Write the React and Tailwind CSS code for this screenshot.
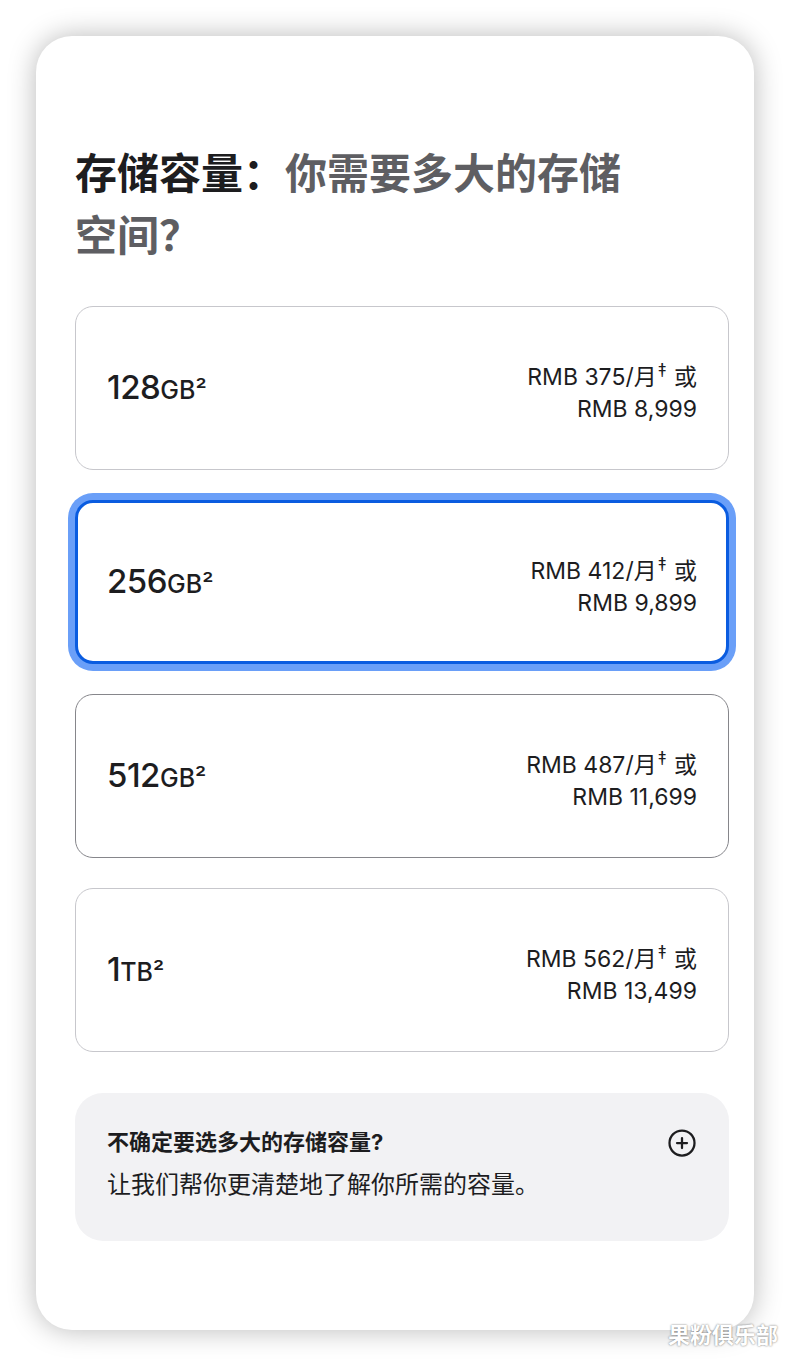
import React from 'react';
import { CirclePlus } from 'lucide-react';

const options = [
    { size: '128', unit: 'GB', monthly: '375', price: '8,999' },
    { size: '256', unit: 'GB', monthly: '412', price: '9,899', selected: true },
    { size: '512', unit: 'GB', monthly: '487', price: '11,699', hovered: true },
    { size: '1', unit: 'TB', monthly: '562', price: '13,499' },
];

const font = { fontFamily: 'Inter, "Noto Sans CJK SC", sans-serif' };

const Option = ({ option }) => {
    let border = 'border border-[#c7c7cc] px-[31px]';
    if (option.selected) {
        border = 'border-[3px] border-[#0a5ce0] ring-[7px] ring-[#6a9ff8] px-[29px]';
    } else if (option.hovered) {
        border = 'border-[1.5px] border-[#86868b] px-[31px]';
    }

    return (
        <div className={`h-[164px] rounded-[18px] bg-white flex items-center justify-between ${border}`}>
            <div className="flex items-baseline text-[#1d1d1f] font-medium">
                <span className="text-[33px] tracking-[-0.5px]">{option.size}</span>
                <span className="text-[25px]">{option.unit}²</span>
            </div>
            <div className="text-right text-[23px] leading-[32px] text-[#1d1d1f] mt-[9px]">
                <div>
                    RMB {option.monthly}/月<sup className="text-[18px] relative -top-[8px] mx-[1px]">‡</sup> 或
                </div>
                <div>RMB {option.price}</div>
            </div>
        </div>
    );
};

const App = () => {
    return (
        <div className="relative w-[790px] h-[1366px] bg-white pt-[36px] pl-[36px]" style={font}>
            <div className="w-[718px] h-[1294px] bg-white rounded-[36px] shadow-[0_0_28px_rgba(0,0,0,0.28)] pl-[39px] pr-[25px] pt-[107px]">
                <h1 className="text-[42px] leading-[62px] font-bold max-w-[570px] text-[#5e5e62]">
                    <span className="text-[#1d1d1f]">存储容量：</span>你需要多大的存储空间？
                </h1>

                <div className="mt-[39px] flex flex-col gap-[30px]">
                    {options.map((o) => (
                        <Option key={o.size} option={o} />
                    ))}
                </div>

                <div className="mt-[41px] h-[148px] rounded-[28px] bg-[#f2f2f4] pl-[32px] pr-[32px] pt-[33px] flex justify-between">
                    <div>
                        <p className="text-[22px] leading-[32px] font-bold text-[#1d1d1f]">不确定要选多大的存储容量?</p>
                        <p className="text-[24px] leading-[34px] mt-[10px] text-[#1d1d1f]">让我们帮你更清楚地了解你所需的容量。</p>
                    </div>
                    <CirclePlus size={30} strokeWidth={1.8} className="text-[#1d1d1f] mt-[2px]" />
                </div>
            </div>

            <div className="absolute right-[12px] bottom-[14px] text-[22px] font-bold text-white [text-shadow:0_0_2px_rgba(0,0,0,0.6)]">
                果粉俱乐部
            </div>
        </div>
    );
};

export default App;
